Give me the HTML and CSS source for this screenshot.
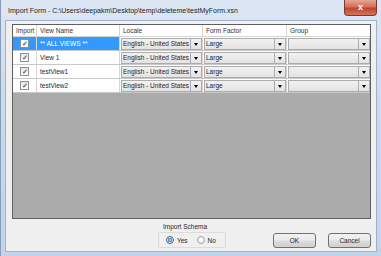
FILE: index.html
```html
<!DOCTYPE html>
<html lang="en">
<head>
    <meta charset="UTF-8">
    <title>Import Form</title>
    <link rel="stylesheet" href="styles.css">
</head>
<body>
  <div class="window">
    <div class="titlebar">
      <span class="title">Import Form - C:\Users\deepakm\Desktop\temp\deleteme\testMyForm.xsn</span>
      <div class="close">x</div>
    </div>

    <div class="client">
      <!-- tabulka pohledu -->
      <div class="grid">
        <div class="row head">
          <div class="cell">Import</div>
          <div class="cell">View Name</div>
          <div class="cell">Locale</div>
          <div class="cell">Form Factor</div>
          <div class="cell">Group</div>
        </div>

        <div class="row selected">
          <div class="cell check"><span class="box">&#10003;</span></div>
          <div class="cell name">** ALL VIEWS **</div>
          <div class="cell"><div class="combo"><span class="val">English - United States</span><span class="arrow"></span></div></div>
          <div class="cell"><div class="combo"><span class="val">Large</span><span class="arrow"></span></div></div>
          <div class="cell"><div class="combo"><span class="val"></span><span class="arrow"></span></div></div>
        </div>

        <div class="row">
          <div class="cell check"><span class="box">&#10003;</span></div>
          <div class="cell name">View 1</div>
          <div class="cell"><div class="combo"><span class="val">English - United States</span><span class="arrow"></span></div></div>
          <div class="cell"><div class="combo"><span class="val">Large</span><span class="arrow"></span></div></div>
          <div class="cell"><div class="combo"><span class="val"></span><span class="arrow"></span></div></div>
        </div>

        <div class="row">
          <div class="cell check"><span class="box">&#10003;</span></div>
          <div class="cell name">testView1</div>
          <div class="cell"><div class="combo"><span class="val">English - United States</span><span class="arrow"></span></div></div>
          <div class="cell"><div class="combo"><span class="val">Large</span><span class="arrow"></span></div></div>
          <div class="cell"><div class="combo"><span class="val"></span><span class="arrow"></span></div></div>
        </div>

        <div class="row">
          <div class="cell check"><span class="box">&#10003;</span></div>
          <div class="cell name">testView2</div>
          <div class="cell"><div class="combo"><span class="val">English - United States</span><span class="arrow"></span></div></div>
          <div class="cell"><div class="combo"><span class="val">Large</span><span class="arrow"></span></div></div>
          <div class="cell"><div class="combo"><span class="val"></span><span class="arrow"></span></div></div>
        </div>
      </div>

      <!-- spodni cast s volbou a tlacitky -->
      <div class="footer">
        <div class="schema">
          <div class="schema-label">Import Schema</div>
          <div class="schema-box">
            <label class="radio"><span class="dot on"></span>Yes</label>
            <label class="radio"><span class="dot"></span>No</label>
          </div>
        </div>
        <div class="buttons">
          <button class="btn">OK</button>
          <button class="btn">Cancel</button>
        </div>
      </div>
    </div>
  </div>
</body>
</html>
```

FILE: styles.css
```css
body{
  margin: 0;
  background-color: #ffffff;
  font-family: "Liberation Sans", Arial, sans-serif;
}

.window{ /* ramecek okna */
  width: 381px;
  height: 256px;
  box-sizing: border-box;
  background: linear-gradient(#dde7f4, #cbdaed 40%, #c2d4eb);
  border-left: 1px solid #8a9db6;
  padding: 0 4px 4px 4px;
  display: flex;
  flex-direction: column;
}

.titlebar{
  height: 20px;
  display: flex;
  align-items: flex-start;
  justify-content: space-between;
}

.title{
  font-size: 7px;
  color: #1e1e1e;
  margin: 7px 0 0 3px;
  white-space: nowrap;
}

.close{ /* cervene tlacitko zavrit */
  width: 33px;
  height: 16px;
  margin-right: 0;
  box-sizing: border-box;
  border: 1px solid #7a3a34;
  border-top: none;
  border-radius: 0 0 4px 4px;
  background: linear-gradient(#e8a696, #d2705c 45%, #c0452e 55%, #d5765a);
  color: #ffffff;
  font-size: 9px;
  font-weight: bold;
  text-align: center;
  line-height: 14px;
}

.client{
  flex: 1;
  background-color: #f0f0f0;
  border: 1px solid #9fb2c9;
  display: flex;
  flex-direction: column;
}

.grid{ /* sede pole s radky */
  margin: 3px 5px 0 6px;
  height: 195px;
  box-sizing: border-box;
  border: 1px solid #5f5f5f;
  background-color: #ababab;
}

.row{
  display: grid;
  grid-template-columns: 24px 83px 83px 84px 83px;
  height: 14px;
  box-sizing: border-box;
  border-bottom: 1px solid #c8c8c8;
  background-color: #ffffff;
  font-size: 6.5px;
  color: #1e1e1e;
}

.row.head{
  height: 12px;
  border-bottom: 1px solid #d5d5d5;
  color: #333333;
}

.cell{
  box-sizing: border-box;
  border-right: 1px solid #d5d5d5;
  padding-left: 3px;
  display: flex;
  align-items: center;
  overflow: hidden;
  white-space: nowrap;
}

.row .cell:last-child{
  border-right: none;
}

.check{
  justify-content: center;
  padding-left: 0;
}

.box{ /* zaskrtavaci policko */
  width: 9px;
  height: 9px;
  box-sizing: border-box;
  border: 1px solid #8e8f8f;
  background: linear-gradient(#e6e6e6, #ffffff);
  color: #4b5d82;
  font-size: 7px;
  line-height: 7px;
  text-align: center;
  font-weight: bold;
}

.selected .check,
.selected .name{
  background-color: #3399ff;
  color: #ffffff;
}

.selected .box{
  background: #ffffff;
  color: #4b5d82;
}

.combo{ /* rozbalovaci seznam */
  flex: 1;
  height: 12px;
  margin-left: -2px;
  box-sizing: border-box;
  border: 1px solid #acacac;
  background: linear-gradient(#f2f2f2, #e3e3e3);
  display: flex;
}

.val{
  flex: 1;
  padding-left: 1px;
  line-height: 10px;
  overflow: hidden;
}

.arrow{
  width: 10px;
  border-left: 1px solid #acacac;
  position: relative;
}

.arrow::after{
  content: "";
  position: absolute;
  left: 3px;
  top: 4px;
  border-left: 2px solid transparent;
  border-right: 2px solid transparent;
  border-top: 3px solid #000000;
}

.footer{
  flex: 1;
  display: flex;
}

.schema{
  margin-left: 152px;
  margin-top: 3px;
  font-size: 6.5px;
  color: #1e1e1e;
}

.schema-label{
  padding-left: 5px;
  height: 9px;
  line-height: 9px;
}

.schema-box{
  width: 68px;
  height: 16px;
  box-sizing: border-box;
  border: 1px solid #dcdcdc;
  border-radius: 2px;
  margin-top: 1px;
  display: flex;
  align-items: center;
  gap: 9px;
  padding-left: 7px;
}

.radio{
  display: flex;
  align-items: center;
  gap: 3px;
}

.dot{
  width: 8px;
  height: 8px;
  box-sizing: border-box;
  border-radius: 50%;
  border: 1px solid #a5a5a5;
  background: radial-gradient(circle, #ffffff 30%, #dcdcdc);
}

.dot.on{
  border-color: #4e6a88;
  background: radial-gradient(circle, #bfe0f8 0, #4d86bd 45%, #dbe6f0 60%);
}

.buttons{
  margin-left: auto;
  margin-right: 5px;
  margin-top: 14px;
  display: flex;
  gap: 12px;
}

.btn{ /* tlacitka OK a Cancel */
  width: 43px;
  height: 15px;
  padding: 0;
  border: 1px solid #707070;
  border-radius: 3px;
  background: linear-gradient(#f2f2f2, #ebebeb 48%, #dddddd 52%, #cfcfcf);
  font-family: "Liberation Sans", Arial, sans-serif;
  font-size: 6.5px;
  color: #1e1e1e;
}
```
